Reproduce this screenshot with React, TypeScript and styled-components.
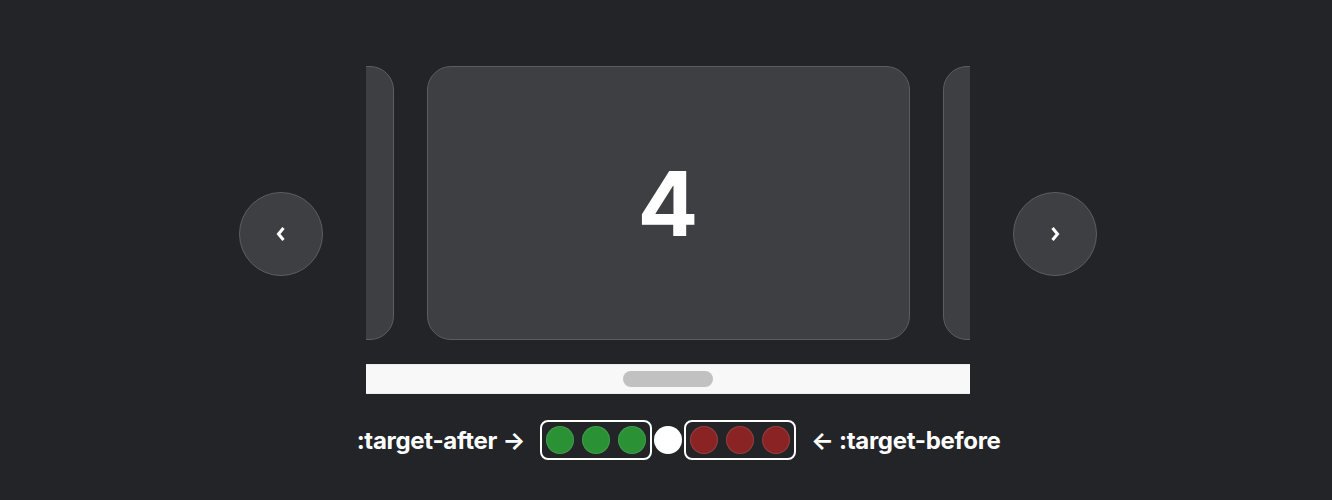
import React from 'react';
import styled, { createGlobalStyle } from 'styled-components';

const GlobalStyle = createGlobalStyle`
  html, body {
    margin: 0;
    padding: 0;
    background: #222428;
    font-family: Inter, "Noto Sans", sans-serif;
    color: #fff;
  }
`;

const Page = styled.main`
  display: flex;
  flex-direction: column;
  align-items: center;
  padding: 66px 0 0 4px;
`;

const CarouselRow = styled.div`
  display: flex;
  align-items: center;
  gap: 43px;
`;

const Column = styled.div`
  display: flex;
  flex-direction: column;
  width: 604px;
`;

const Scroller = styled.div`
  display: flex;
  justify-content: center;
  gap: 33px;
  width: 604px;
  height: 274px;
  overflow: hidden;
`;

const Card = styled.div`
  flex: 0 0 483px;
  box-sizing: border-box;
  display: flex;
  align-items: center;
  justify-content: center;
  background: #3e3f43;
  border: 1px solid #5c5d61;
  border-radius: 24px;
  font-size: 90px;
  font-weight: 700;
  color: #fff;
`;

const ScrollTrack = styled.div`
  margin-top: 24px;
  height: 30px;
  box-sizing: border-box;
  background: #f8f8f8;
  border-top: 1px solid #ececec;
  border-bottom: 1px solid #ececec;
  display: flex;
  align-items: center;
  justify-content: center;
`;

const ScrollThumb = styled.div`
  width: 90px;
  height: 16px;
  border-radius: 8px;
  background: #c1c1c1;
`;

const NavButton = styled.button`
  width: 84px;
  height: 84px;
  border-radius: 50%;
  box-sizing: border-box;
  background: #3e3f43;
  border: 1px solid #5d5e62;
  display: flex;
  align-items: center;
  justify-content: center;
  padding: 0;
  margin-top: 8px;
  cursor: pointer;
`;

const MarkerRow = styled.div`
  display: grid;
  grid-template-columns: 1fr auto 1fr;
  align-items: center;
  column-gap: 15px;
  width: 100%;
  margin-top: 26px;
`;

const Label = styled.span<{ $side: 'left' | 'right' }>`
  font-size: 24px;
  font-weight: 700;
  letter-spacing: -0.3px;
  color: #fff;
  white-space: nowrap;
  justify-self: ${(p) => (p.$side === 'left' ? 'end' : 'start')};
`;

const Markers = styled.div`
  display: flex;
  align-items: center;
  gap: 2px;
`;

const MarkerGroup = styled.div`
  display: flex;
  gap: 8px;
  padding: 4px;
  border: 2px solid #fff;
  border-radius: 8px;
`;

const Dot = styled.span<{ $color: string }>`
  width: 28px;
  height: 28px;
  border-radius: 50%;
  background: ${(p) => p.$color};
  box-shadow: inset 0 0 0 1px rgba(255, 255, 255, 0.12);
`;

const Chevron = ({ dir }: { dir: 'left' | 'right' }) => (
  <svg width="12" height="16" viewBox="0 0 12 16">
    <polyline
      points={dir === 'left' ? '8.5,2 3.5,8 8.5,14' : '3.5,2 8.5,8 3.5,14'}
      fill="none"
      stroke="#fff"
      strokeWidth="3"
    />
  </svg>
);

const GREEN = '#2a9134';
const RED = '#8a2424';

export default function App() {
  return (
    <>
      <GlobalStyle />
      <Page>
        <CarouselRow>
          <NavButton aria-label="Previous">
            <Chevron dir="left" />
          </NavButton>
          <Column>
            <Scroller>
              <Card />
              <Card>4</Card>
              <Card />
            </Scroller>
            <ScrollTrack>
              <ScrollThumb />
            </ScrollTrack>
          </Column>
          <NavButton aria-label="Next">
            <Chevron dir="right" />
          </NavButton>
        </CarouselRow>
        <MarkerRow>
          <Label $side="left">:target-after →</Label>
          <Markers>
            <MarkerGroup>
              {[0, 1, 2].map((i) => (
                <Dot key={i} $color={GREEN} />
              ))}
            </MarkerGroup>
            <Dot $color="#fff" />
            <MarkerGroup>
              {[0, 1, 2].map((i) => (
                <Dot key={i} $color={RED} />
              ))}
            </MarkerGroup>
          </Markers>
          <Label $side="right">← :target-before</Label>
        </MarkerRow>
      </Page>
    </>
  );
}
